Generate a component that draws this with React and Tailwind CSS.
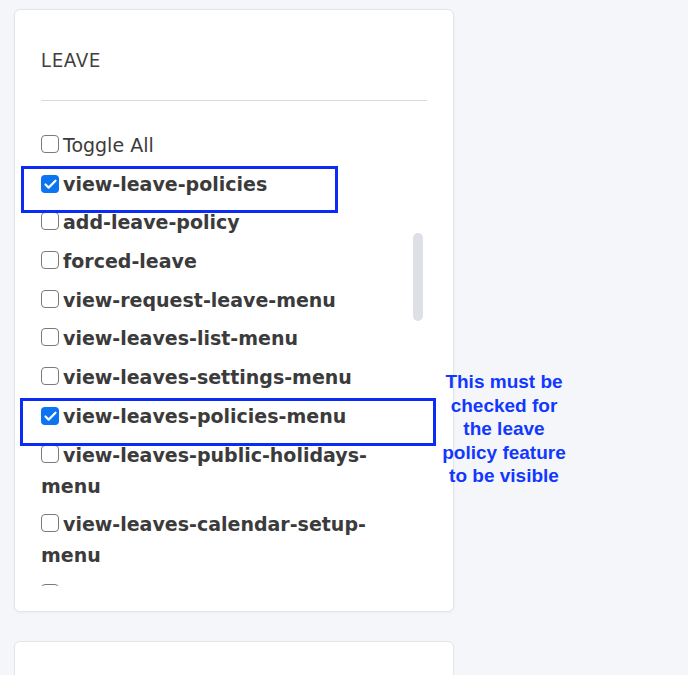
import { Check } from 'lucide-react';

const perms = [
  { name: 'view-leave-policies', on: true },
  { name: 'add-leave-policy' },
  { name: 'forced-leave' },
  { name: 'view-request-leave-menu' },
  { name: 'view-leaves-list-menu' },
  { name: 'view-leaves-settings-menu' },
  { name: 'view-leaves-policies-menu', on: true },
  { name: 'view-leaves-public-holidays-menu' },
  { name: 'view-leaves-calendar-setup-menu' },
  { name: 'view-leaves-reports-menu' },
];

function Box({ on }) {
  if (on) {
    return (
      <span className="inline-flex items-center justify-center w-[18px] h-[18px] rounded-[4px] bg-[#0a74f2] align-[-1px] mr-[4px]">
        <Check size={15} strokeWidth={3.5} className="text-white" />
      </span>
    );
  }
  return <span className="inline-block w-[18px] h-[18px] rounded-[4px] border-[1.5px] border-[#7a7a7a] bg-white align-[-1px] mr-[4px]" />;
}

export default function App() {
  return (
    <div className="relative min-h-[675px] bg-[#f5f6fa] pt-[9px] pl-[14px] overflow-hidden" style={{ fontFamily: '"DejaVu Sans", sans-serif' }}>
      <div className="w-[440px] h-[603px] bg-white border border-[#e3e5ea] rounded-[6px] shadow-[0_1px_3px_rgba(0,0,0,0.04)] px-[26px] pt-[27px]">
        <h3 className="text-[19px] leading-[48px] text-[#3f3f3f] tracking-[0.2px]" style={{ fontFamily: 'Inter, sans-serif' }}>LEAVE</h3>
        <div className="h-px bg-[#d9d9d9] mt-[15px] w-[386px]" />

        <div className="relative mt-[29px] h-[456px] w-[386px] overflow-hidden">
          <div className="w-[372px] text-[19px] leading-[31px] text-[#3b3b3b]">
            <div className="mb-[7.7px]">
              <Box />
              <span className="font-normal">Toggle All</span>
            </div>
            {perms.map((p) => (
              <div key={p.name} className="mb-[7.7px] font-bold">
                <Box on={p.on} />
                {p.name}
              </div>
            ))}
          </div>
          <div className="absolute right-[4px] top-[103px] w-[10px] h-[88px] rounded-full bg-[#dde1e6]" />
        </div>
      </div>

      <div className="mt-[29px] w-[440px] h-[60px] bg-white border border-[#e3e5ea] rounded-[6px]" />

      <div className="absolute left-[21px] top-[166px] w-[317px] h-[47px] border-[3px] border-[#0b2cf5]" />
      <div className="absolute left-[20px] top-[398px] w-[416px] h-[48px] border-[3px] border-[#0b2cf5]" />

      <div
        className="absolute left-[424px] top-[370px] w-[160px] text-center font-bold text-[19px] leading-[23.5px] text-[#1238ff]"
        style={{ fontFamily: '"Liberation Sans", Arial, sans-serif' }}
      >
        This must be<br />checked for<br />the leave<br />policy feature<br />to be visible
      </div>
    </div>
  );
}
